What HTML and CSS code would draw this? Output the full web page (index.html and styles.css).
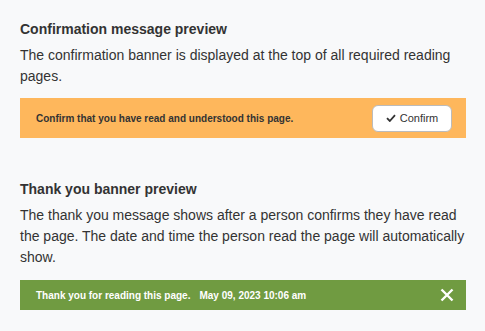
FILE: index.html
```html
<!DOCTYPE html>
<html>
<head>
<meta charset="utf-8">
<link rel="stylesheet" href="styles.css">
</head>
<body>
<div class="page">
  <section class="section">
    <h2 class="title">Confirmation message preview</h2>
    <p class="desc">The confirmation banner is displayed at the top of all required reading pages.</p>
    <div class="banner confirm-banner">
      <span class="banner-text">Confirm that you have read and understood this page.</span>
      <button class="confirm-btn"><svg class="check" viewBox="0 0 10 8" width="10" height="8"><path d="M1 4.2 L3.8 7 L9 1.2" fill="none" stroke="#333" stroke-width="1.8"/></svg>Confirm</button>
    </div>
  </section>
  <section class="section second">
    <h2 class="title">Thank you banner preview</h2>
    <p class="desc">The thank you message shows after a person confirms they have read the page. The date and time the person read the page will automatically show.</p>
    <div class="banner thanks-banner">
      <span class="banner-text">Thank you for reading this page.<span class="date">May 09, 2023 10:06 am</span></span>
      <svg class="close" viewBox="0 0 14 14" width="14" height="14"><path d="M1.5 1.5 L12.5 12.5 M12.5 1.5 L1.5 12.5" stroke="#fff" stroke-width="2.4" fill="none"/></svg>
    </div>
  </section>
</div>
</body>
</html>
```
FILE: styles.css
```css
html, body {
  margin: 0;
  padding: 0;
  background: #f8f9fa;
}
body {
  font-family: "Liberation Sans", Arial, sans-serif;
  color: #333;
}
.page {
  padding: 20px 19px 0 20px;
}
.section.second {
  margin-top: 42px;
}
.title {
  margin: 0;
  font-size: 14px;
  font-weight: bold;
  line-height: 18px;
  color: #333;
}
.desc {
  margin: 7px 0 0;
  font-size: 14px;
  line-height: 21px;
  color: #333;
}
.banner {
  display: flex;
  align-items: center;
  justify-content: space-between;
  box-sizing: border-box;
}
.confirm-banner {
  margin-top: 11px;
  height: 40px;
  background: #feb75c;
  padding: 0 14px 0 16px;
}
.banner-text {
  font-size: 10px;
  font-weight: bold;
}
.confirm-banner .banner-text {
  color: #333;
}
.confirm-btn {
  display: flex;
  align-items: center;
  justify-content: center;
  gap: 4px;
  width: 80px;
  height: 27px;
  box-sizing: border-box;
  background: #fff;
  border: 1px solid #bbb;
  border-radius: 6px;
  font-family: "Liberation Sans", Arial, sans-serif;
  font-size: 11px;
  color: #333;
  padding: 0;
}
.thanks-banner {
  margin-top: 12px;
  height: 30px;
  background: #709b41;
  padding: 0 12px 0 16px;
}
.thanks-banner .banner-text {
  color: #fff;
}
.date {
  margin-left: 9px;
}
.close {
  display: block;
}
```
